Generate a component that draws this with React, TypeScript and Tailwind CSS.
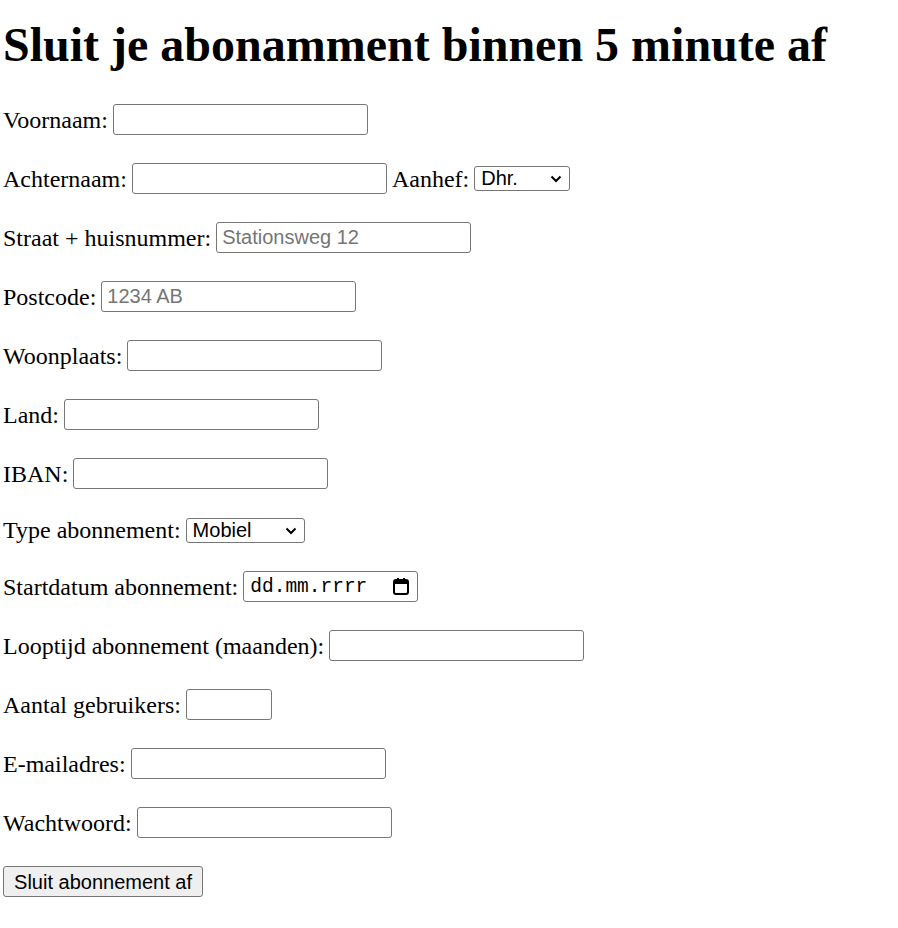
import React from 'react';

// Styles shared by the plain text inputs
const inputCls =
  "h-[31px] w-[255px] rounded-[3px] border border-[#767676] bg-white px-[5px] text-[20px] text-black font-['Liberation_Sans',Arial,sans-serif] placeholder:text-[#757575] outline-none";

const selectCls =
  "h-[25px] appearance-none rounded-[3px] border border-[#767676] bg-white pl-[6px] text-[20px] leading-[23px] text-black font-['Liberation_Sans',Arial,sans-serif] outline-none";

function Chevron() {
  return (
    <svg className="pointer-events-none absolute right-[8px] top-[9px]" width="12" height="8" viewBox="0 0 12 8">
      <path d="M1.5 1.5 L6 6 L10.5 1.5" fill="none" stroke="#000" strokeWidth="2" />
    </svg>
  );
}

function CalendarIcon() {
  return (
    <svg className="pointer-events-none absolute right-[9px] top-[7px]" width="16" height="17" viewBox="0 0 16 17">
      <rect x="1" y="2" width="14" height="14" rx="2" fill="none" stroke="#000" strokeWidth="2" />
      <rect x="1" y="2" width="14" height="4" fill="#000" />
      <rect x="4" y="0" width="2" height="3" fill="#000" />
      <rect x="10" y="0" width="2" height="3" fill="#000" />
    </svg>
  );
}

// One line of the form: label text, a space, then the field
function Row({ label, children, short }: { label: string; children: React.ReactNode; short?: boolean }) {
  return (
    <div className={`flex items-center gap-[5px] ${short ? 'h-[26px]' : 'h-[31px]'}`}>
      <label>{label}</label>
      {children}
    </div>
  );
}

export default function App() {
  return (
    <div className="min-h-screen bg-white px-[3px] text-[24px] text-black font-['Liberation_Serif','Times_New_Roman',serif]">
      <h1 className="mt-[21px] mb-[35px] h-[48px] text-[48px] leading-[48px] font-bold">
        Sluit je abonamment binnen 5 minute af
      </h1>

      <form className="flex flex-col gap-[28px]" onSubmit={(e) => e.preventDefault()}>
        <Row label="Voornaam:">
          <input type="text" className={inputCls} />
        </Row>

        <div className="flex h-[31px] items-center gap-[5px]">
          <label>Achternaam:</label>
          <input type="text" className={inputCls} />
          <label>Aanhef:</label>
          <div className="relative flex">
            <select className={`${selectCls} w-[96px]`} defaultValue="Dhr.">
              <option>Dhr.</option>
              <option>Mevr.</option>
            </select>
            <Chevron />
          </div>
        </div>

        <Row label="Straat + huisnummer:">
          <input type="text" placeholder="Stationsweg 12" className={inputCls} />
        </Row>

        <Row label="Postcode:">
          <input type="text" placeholder="1234 AB" className={inputCls} />
        </Row>

        <Row label="Woonplaats:">
          <input type="text" className={inputCls} />
        </Row>

        <Row label="Land:">
          <input type="text" className={inputCls} />
        </Row>

        <Row label="IBAN:">
          <input type="text" className={inputCls} />
        </Row>

        <Row label="Type abonnement:" short>
          <div className="relative flex">
            <select className={`${selectCls} w-[119px]`} defaultValue="Mobiel">
              <option>Mobiel</option>
              <option>Internet</option>
              <option>TV</option>
            </select>
            <Chevron />
          </div>
        </Row>

        <Row label="Startdatum abonnement:">
          <div className="relative flex">
            <input
              type="text"
              placeholder="dd.mm.rrrr"
              className="h-[31px] w-[175px] rounded-[3px] border border-[#767676] bg-white pl-[6px] text-[19.5px] font-['Liberation_Mono','Courier_New',monospace] placeholder:text-black outline-none"
            />
            <CalendarIcon />
          </div>
        </Row>

        <Row label="Looptijd abonnement (maanden):">
          <input type="text" className={inputCls} />
        </Row>

        <Row label="Aantal gebruikers:">
          <input type="text" className={`${inputCls} !w-[86px]`} />
        </Row>

        <Row label="E-mailadres:">
          <input type="email" className={inputCls} />
        </Row>

        <Row label="Wachtwoord:">
          <input type="password" className={inputCls} />
        </Row>

        <div className="flex">
          <button
            type="submit"
            className="h-[31px] w-[200px] rounded-[3px] border border-[#767676] bg-[#efefef] text-[20px] font-['Liberation_Sans',Arial,sans-serif]"
          >
            Sluit abonnement af
          </button>
        </div>
      </form>
    </div>
  );
}
